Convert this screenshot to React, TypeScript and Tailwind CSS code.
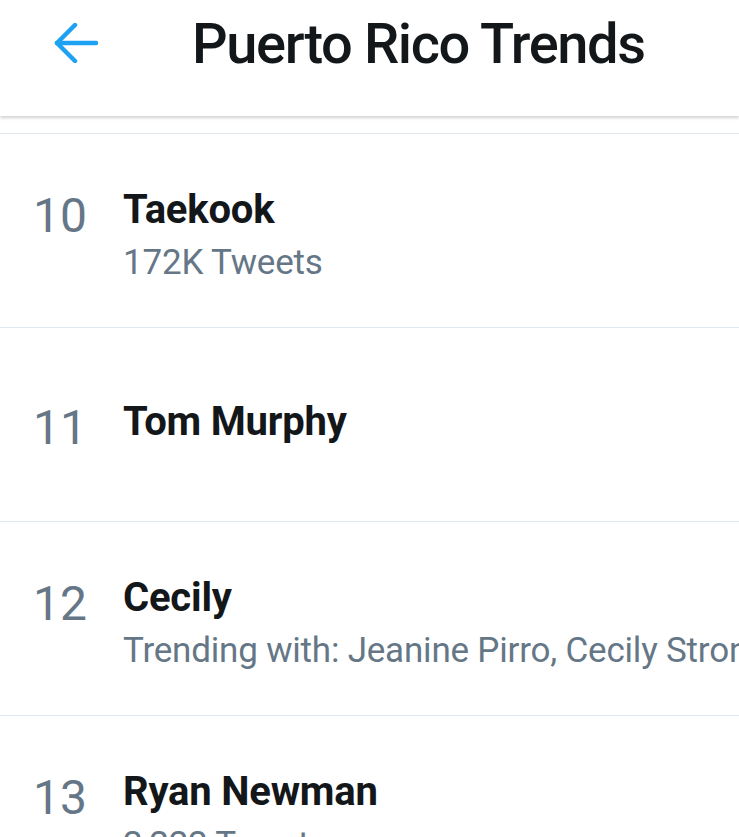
const trends = [
  { rank: 10, name: "Taekook", sub: "172K Tweets" },
  { rank: 11, name: "Tom Murphy", sub: "" },
  { rank: 12, name: "Cecily", sub: "Trending with: Jeanine Pirro, Cecily Strong" },
  { rank: 13, name: "Ryan Newman", sub: "2,222 Tweets" },
];

export default function App() {
  return (
    <div className="h-[837px] w-[739px] overflow-hidden bg-white font-['Roboto',_sans-serif]">
      {/* Header */}
      <header className="relative z-10 flex h-[116px] items-start bg-white pl-[54px] pt-[12px] shadow-[0_2px_3px_rgba(0,0,0,0.18)]">
        <svg
          className="mt-[11px] shrink-0"
          width="44"
          height="40"
          viewBox="0 0 44 40"
          fill="none"
          stroke="#1da1f2"
          strokeWidth="4.5"
          strokeLinecap="round"
          strokeLinejoin="round"
        >
          <path d="M3 20h39" />
          <path d="M21 2 3 20l18 18" />
        </svg>
        <h1 className="ml-[94px] text-[56px] font-medium leading-[64px] tracking-[-1.4px] text-[#14171a]">
          Puerto Rico Trends
        </h1>
      </header>

      {/* Bottom edge of the row hidden under the header */}
      <div className="h-[18px] border-b border-[#e1e8ed]" />

      {/* Trends */}
      <ul>
        {trends.map((t) => (
          <li
            key={t.rank}
            className="flex h-[194px] items-center border-b border-[#e1e8ed] pl-[33px]"
          >
            <div className="flex min-w-0 flex-1 items-start">
              <span className="mt-[6px] w-[90px] shrink-0 text-[48px] leading-[47px] text-[#657786]">
                {t.rank}
              </span>
              <div className="min-w-0 flex-1">
                <div className="whitespace-nowrap text-[40px] font-bold leading-[47px] tracking-[-0.2px] text-[#14171a]">
                  {t.name}
                </div>
                {t.sub && (
                  <div className="mb-[-16px] overflow-hidden whitespace-nowrap text-[35px] leading-[59px] tracking-[-0.2px] text-[#657786]">
                    {t.sub}
                  </div>
                )}
              </div>
            </div>
          </li>
        ))}
      </ul>
    </div>
  );
}
